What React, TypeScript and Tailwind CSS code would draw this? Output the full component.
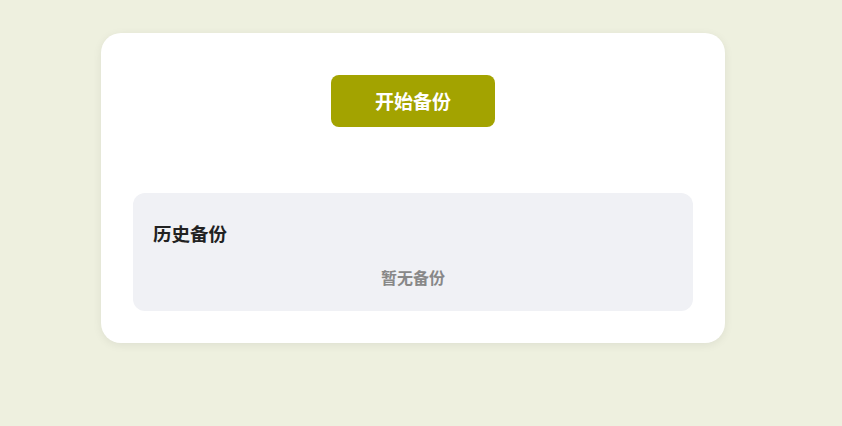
export default function App() {
  return (
    <div
      className="min-h-[426px] w-full bg-[#eef0df] pt-[33px] pl-[101px]"
      style={{ fontFamily: '"Noto Sans CJK SC", "Noto Sans", sans-serif' }}
    >
      <div className="w-[624px] rounded-[20px] bg-white px-8 pt-[42px] pb-[32px] shadow-[0_2px_10px_rgba(0,0,0,0.07)]">
        <div className="flex justify-center">
          <button className="h-[52px] w-[164px] rounded-lg bg-[#a3a300] text-[19px] font-bold text-white">
            开始备份
          </button>
        </div>

        <div className="mt-[66px] rounded-xl bg-[#f0f1f5] px-5 pt-[27px] pb-[22px]">
          <h2 className="text-[18.5px] leading-[27px] font-bold text-[#222]">历史备份</h2>
          <p className="mt-[18px] text-center text-[16px] leading-[24px] font-bold text-[#888]">暂无备份</p>
        </div>
      </div>
    </div>
  );
}
